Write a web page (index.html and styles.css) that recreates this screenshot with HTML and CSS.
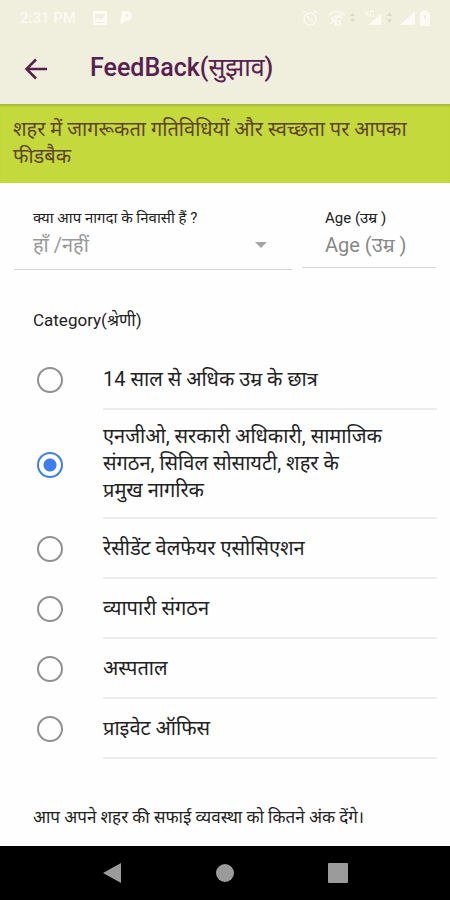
FILE: index.html
```html
<!DOCTYPE html>
<html lang="hi">
<head>
<meta charset="utf-8">
<meta name="viewport" content="width=device-width, initial-scale=1">
<title>FeedBack(सुझाव)</title>
<link rel="stylesheet" href="styles.css">
</head>
<body>
<header class="top">
  <div class="status">
    <span class="clock">2:31 PM</span>
    <svg class="ico image" viewBox="0 0 16 14"><path fill="currentColor" fill-rule="evenodd" d="M1 0h14v14H1zM3 3v6l3-3 3 3 4-5V3zM3 11v1h10v-1z"/></svg>
    <svg class="ico" viewBox="0 0 16 16"><path fill="currentColor" fill-rule="evenodd" d="M4 1h5a5 5 0 0 1 0 10H7l-3 4-2-3 1-5zM8 4v3h2V4z"/></svg>
    <span class="spacer"></span>
    <svg class="ico alarm" viewBox="0 0 16 16" fill="none" stroke="currentColor" stroke-width="1.5"><circle cx="8" cy="9" r="6"/><path d="M1 3l3-2M15 3l-3-2M5 6l3 3 3 2"/></svg>
    <svg class="ico wifi" viewBox="0 0 18 16" fill="none" stroke="currentColor" stroke-width="1.5"><path d="M1 5q8-7 16 0M4 8q5-4 10 0M9 14L3 8M2 14L15 2M7 11h5v4H7z"/></svg>
    <svg class="arrows" viewBox="0 0 5 14"><path fill="currentColor" d="M0 5l2.500-3L5 5zM0 8h5l-2.500 3z"/></svg>
    <svg class="ico signal" viewBox="0 0 20 17"><path fill="currentColor" d="M19 3v13H5zM1 1h1v3h2V1h1v6H4V5H1zM7 1h4v1H8v4h2V4h1v3H7z"/></svg>
    <svg class="arrows" viewBox="0 0 5 14"><path fill="currentColor" d="M0 5l2.500-4L5 5zM0 8h5l-2.500 4z"/></svg>
    <svg class="ico bars" viewBox="0 0 16 16"><path fill="currentColor" d="M15 1v14H0z"/></svg>
    <svg class="ico battery" viewBox="0 0 10 16"><path fill="currentColor" fill-rule="evenodd" d="M3 0h4v2h3v14H0V2h3zM4 5v4h2V5z"/></svg>
  </div>
  <div class="appbar">
    <button class="back" type="button" aria-label="Back">
      <svg viewBox="0 0 24 24" fill="none" stroke="currentColor" stroke-width="2.500"><path d="M23 12H3M12 2.500L2.500 12l9.500 9.500"/></svg>
    </button>
    <h1>FeedBack(<span>सुझाव</span>)</h1>
  </div>
</header>
<main>
  <p class="banner">शहर में जागरूकता गतिविधियों और स्वच्छता पर आपका फीडबैक</p>
  <form>
    <div class="fields">
      <div class="field resident">
        <label for="resident">क्या आप नागदा के निवासी हैं ?</label>
        <div class="picker">
          <select id="resident"><option>हाँ /नहीं</option></select>
          <svg viewBox="0 0 12 6"><path fill="currentColor" d="M0 0h12L6 6z"/></svg>
        </div>
      </div>
      <div class="field age">
        <label for="age">Age (उम्र )</label>
        <input id="age" type="text" placeholder="Age (उम्र )">
      </div>
    </div>
    <fieldset>
      <legend>Category(श्रेणी)</legend>
      <label class="option"><input type="radio" name="category"><span>14 साल से अधिक उम्र के छात्र</span></label>
      <label class="option"><input type="radio" name="category" checked><span>एनजीओ, सरकारी अधिकारी, सामाजिक संगठन, सिविल सोसायटी, शहर के प्रमुख नागरिक</span></label>
      <label class="option"><input type="radio" name="category"><span>रेसीडेंट वेलफेयर एसोसिएशन</span></label>
      <label class="option"><input type="radio" name="category"><span>व्यापारी संगठन</span></label>
      <label class="option"><input type="radio" name="category"><span>अस्पताल</span></label>
      <label class="option"><input type="radio" name="category"><span>प्राइवेट ऑफिस</span></label>
    </fieldset>
    <p class="question">आप अपने शहर की सफाई व्यवस्था को कितने अंक देंगे।</p>
  </form>
</main>
<nav>
  <button type="button" aria-label="Back"><svg viewBox="0 0 20 20"><path fill="currentColor" d="M19 0v20L1 10z"/></svg></button>
  <button type="button" aria-label="Home"><svg viewBox="0 0 20 20"><circle fill="currentColor" cx="10" cy="10" r="9"/></svg></button>
  <button type="button" aria-label="Recent apps"><svg viewBox="0 0 20 20"><rect fill="currentColor" width="20" height="20" rx="1"/></svg></button>
</nav>
</body>
</html>
```
FILE: styles.css
```css
* { box-sizing: border-box; }
body {
  margin: 0;
  min-height: 100vh;
  display: flex;
  flex-direction: column;
  background: #fefefe;
  color: #222;
  font-family: Roboto, "Noto Sans", "Noto Sans Devanagari", sans-serif;
  font-size: 20px;
}
button { border: 0; padding: 0; background: none; color: inherit; }
svg { display: block; }
p, h1 { margin: 0; }

.top { background: #f0eedc; color: #57204f; }
.status {
  display: flex;
  align-items: center;
  height: 36px;
  padding: 0 20px;
  color: #fbfaf3;
}
.clock { width: 72px; font-size: 15px; font-weight: 500; }
.ico { height: 16px; width: 16px; }
.image { margin-right: 10px; }
.spacer { flex: 1; }
.alarm { margin-right: 10px; }
.wifi { width: 18px; margin-right: 4px; }
.arrows { width: 5px; height: 14px; color: #d9d8c9; }
.signal { width: 20px; margin: 0 4px 0 8px; }
.bars { margin: 0 4px 0 8px; }
.battery { width: 10px; }
.appbar {
  display: flex;
  align-items: center;
  height: 68px;
  padding: 0 24px 4px;
}
.back { width: 24px; margin-right: 42px; padding-top: 2px; }
h1 { font-size: 25px; font-weight: 500; line-height: 32px; }
h1 span { font-weight: 400; }

.banner {
  padding: 12px 13px 13px;
  background: #c4d93b;
  box-shadow: inset 0 3px 2px -1px #a6b83a;
  color: #60432a;
  font-size: 20px;
  line-height: 27px;
}
main { flex: 1; }
.fields {
  display: flex;
  align-items: flex-start;
  gap: 10px;
  padding: 24px 14px 0;
}
.field { border-bottom: 1px solid #d4d4d4; }
.field label { display: block; font-size: 15px; line-height: 22px; }
.resident { flex: 1; padding-left: 19px; }
.age { width: 134px; padding-left: 23px; }
.picker { display: flex; align-items: center; padding: 0 25px 8px 0; color: #a4a4a4; }
.picker svg { width: 12px; height: 6px; }
select, .age input {
  display: block;
  width: 100%;
  height: 32px;
  border: 0;
  padding: 0;
  background: none;
  appearance: none;
  font: inherit;
  font-size: 20px;
  color: #999;
}
select { flex: 1; }
.age input { margin-bottom: 6px; }
.age input::placeholder { color: #888; opacity: 1; }

fieldset { margin: 0; border: 0; padding: 36px 13px 0 33px; min-width: 0; }
legend { float: left; width: 100%; margin-bottom: 16px; padding: 0; font-size: 17px; line-height: 28px; }
.option { display: flex; align-items: center; clear: both; }
.option input {
  appearance: none;
  flex: none;
  width: 26px;
  height: 26px;
  margin: 0 40px 0 4px;
  border: 2px solid #909090;
  border-radius: 50%;
}
.option input:checked {
  border-color: #3f7eea;
  background: radial-gradient(circle, #3f7eea 6px, transparent 7px);
}
.option span {
  flex: 1;
  display: grid;
  align-content: center;
  min-height: 60px;
  padding: 13px 54px 13px 0;
  border-bottom: 2px solid #ececec;
  line-height: 27px;
}
.question { padding: 44px 33px 12px; font-size: 17px; line-height: 28px; }

nav {
  display: flex;
  justify-content: center;
  align-items: center;
  gap: 93px;
  height: 54px;
  background: #000;
  color: #9b9b9b;
}
nav svg { width: 20px; height: 20px; }
```
